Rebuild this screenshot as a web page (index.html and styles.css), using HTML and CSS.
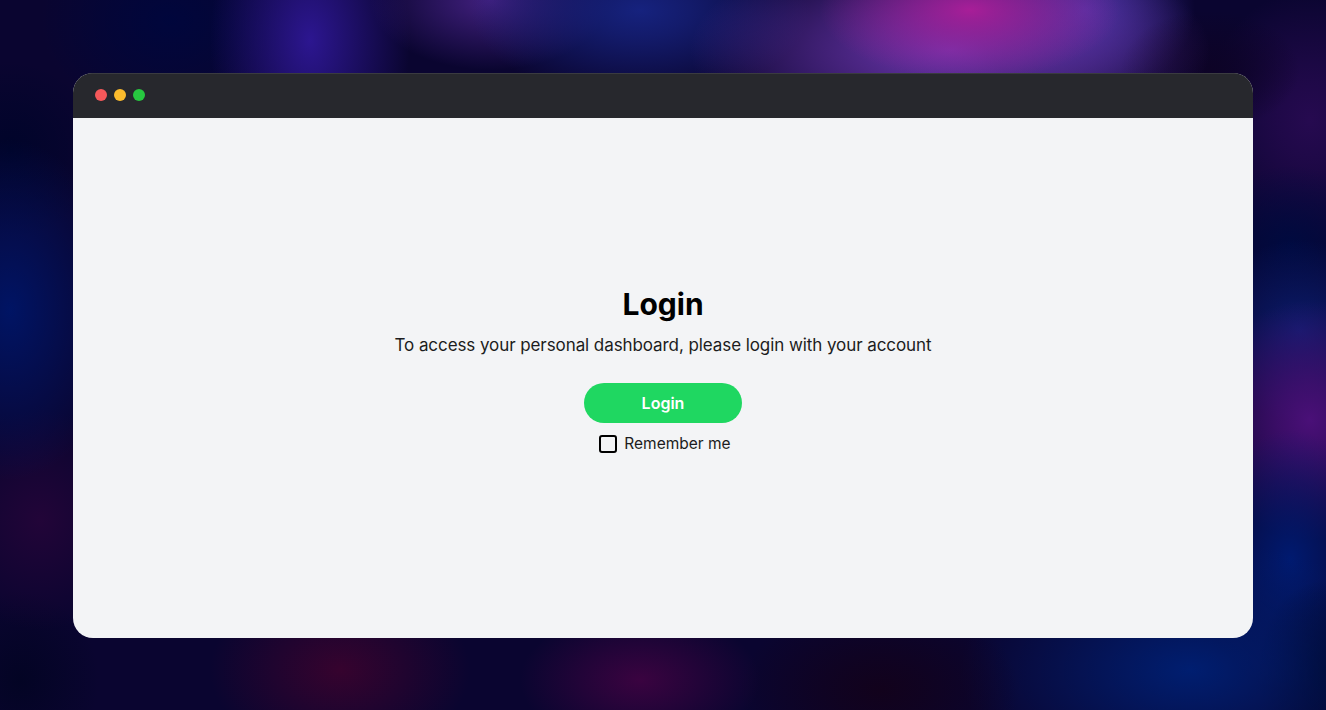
FILE: index.html
```html
<!DOCTYPE html>
<html lang="en">
<head>
<meta charset="utf-8">
<title>Login</title>
<link rel="stylesheet" href="styles.css">
</head>
<body>
<div class="window">
  <div class="titlebar">
    <span class="dot dot-red"></span>
    <span class="dot dot-yellow"></span>
    <span class="dot dot-green"></span>
  </div>
  <main class="content">
    <h1 class="title">Login</h1>
    <p class="subtitle">To access your personal dashboard, please login with your account</p>
    <button class="login-btn" type="button">Login</button>
    <label class="remember"><span class="check"></span><span>Remember me</span></label>
  </main>
</div>
</body>
</html>
```

FILE: styles.css
```css
* { box-sizing: border-box; }
html, body { height: 100%; margin: 0; }
body {
  overflow: hidden;
  padding: 73px 73px 72px;
  font-family: Inter, "Liberation Sans", sans-serif;
  background-color: #0a0530;
  background-image:
    radial-gradient(ellipse 150px 70px at 970px 10px, #a81e98, 45%, rgba(168,30,152,0)),
    radial-gradient(ellipse 260px 110px at 950px 50px, #6a35aa, 55%, rgba(106,53,170,0)),
    radial-gradient(ellipse 90px 60px at 1210px 70px, #0d0326, 55%, rgba(13,3,38,0)),
    radial-gradient(ellipse 110px 90px at 1085px 10px, #3f2f9c, 55%, rgba(63,47,156,0)),
    radial-gradient(ellipse 170px 90px at 640px 10px, #16227e, 55%, rgba(22,34,126,0)),
    radial-gradient(ellipse 120px 70px at 490px 0, #42207f, 50%, rgba(66,32,127,0)),
    radial-gradient(ellipse 100px 160px at 310px 40px, #2c1690, 50%, rgba(44,22,144,0)),
    radial-gradient(ellipse 130px 100px at 170px 20px, #00063c, 55%, rgba(0,6,60,0)),
    radial-gradient(ellipse 110px 170px at 10px 310px, #001464, 50%, rgba(0,20,100,0)),
    radial-gradient(ellipse 90px 90px at 10px 150px, #00042a, 50%, rgba(0,4,42,0)),
    radial-gradient(ellipse 100px 110px at 40px 520px, #220538, 50%, rgba(34,5,56,0)),
    radial-gradient(ellipse 130px 90px at 340px 670px, #36032e, 50%, rgba(54,3,46,0)),
    radial-gradient(ellipse 120px 70px at 640px 680px, #3a0340, 50%, rgba(58,3,64,0)),
    radial-gradient(ellipse 140px 90px at 880px 690px, #12021c, 55%, rgba(18,2,28,0)),
    radial-gradient(ellipse 230px 130px at 1190px 670px, #001e70, 50%, rgba(0,30,112,0)),
    radial-gradient(ellipse 70px 90px at 1326px 670px, #00031f, 50%, rgba(0,3,31,0)),
    radial-gradient(ellipse 90px 130px at 1290px 560px, #001a70, 50%, rgba(0,26,112,0)),
    radial-gradient(ellipse 110px 120px at 1310px 420px, #4a1078, 55%, rgba(74,16,120,0)),
    radial-gradient(ellipse 100px 90px at 1300px 330px, #0a1c6c, 50%, rgba(10,28,108,0)),
    radial-gradient(ellipse 90px 80px at 1290px 245px, #000a40, 50%, rgba(0,10,64,0)),
    radial-gradient(ellipse 110px 130px at 1310px 120px, #260a50, 55%, rgba(38,10,80,0)),
    radial-gradient(ellipse 80px 90px at 20px 680px, #030424, 50%, rgba(3,4,36,0));
}
.window {
  display: flex;
  flex-direction: column;
  height: 100%;
  border-radius: 20px;
  overflow: hidden;
  background: #f3f4f6;
}
.titlebar {
  display: flex;
  flex: none;
  align-items: center;
  gap: 7px;
  height: 45px;
  padding: 0 0 2px 22px;
  background: #27282d;
  border-top: 1px solid #3a3b40;
}
.dot { width: 12px; height: 12px; border-radius: 50%; }
.dot-red { background: #f5585a; }
.dot-yellow { background: #fbbb2d; }
.dot-green { background: #27c840; }
.content {
  display: flex;
  flex: 1;
  flex-direction: column;
  align-items: center;
  padding-top: 168px;
}
.title {
  margin: 0;
  font-size: 30px;
  line-height: 36px;
  font-weight: 700;
  color: #000;
}
.subtitle {
  margin: 9px 0 0;
  font-size: 17px;
  line-height: 28px;
  letter-spacing: -0.08px;
  color: #1c1c20;
}
.login-btn {
  width: 158px;
  height: 40px;
  margin-top: 24px;
  border: 0;
  border-radius: 20px;
  background: #1fd761;
  color: #fff;
  font: 600 16px/24px Inter, "Liberation Sans", sans-serif;
}
.remember {
  display: flex;
  align-items: center;
  gap: 7px;
  margin-top: 10px;
  padding-left: 4px;
  font-size: 15.5px;
  line-height: 21px;
  color: #1c1c20;
}
.check {
  width: 18px;
  height: 18px;
  border: 2px solid #000;
  border-radius: 3px;
}
```
